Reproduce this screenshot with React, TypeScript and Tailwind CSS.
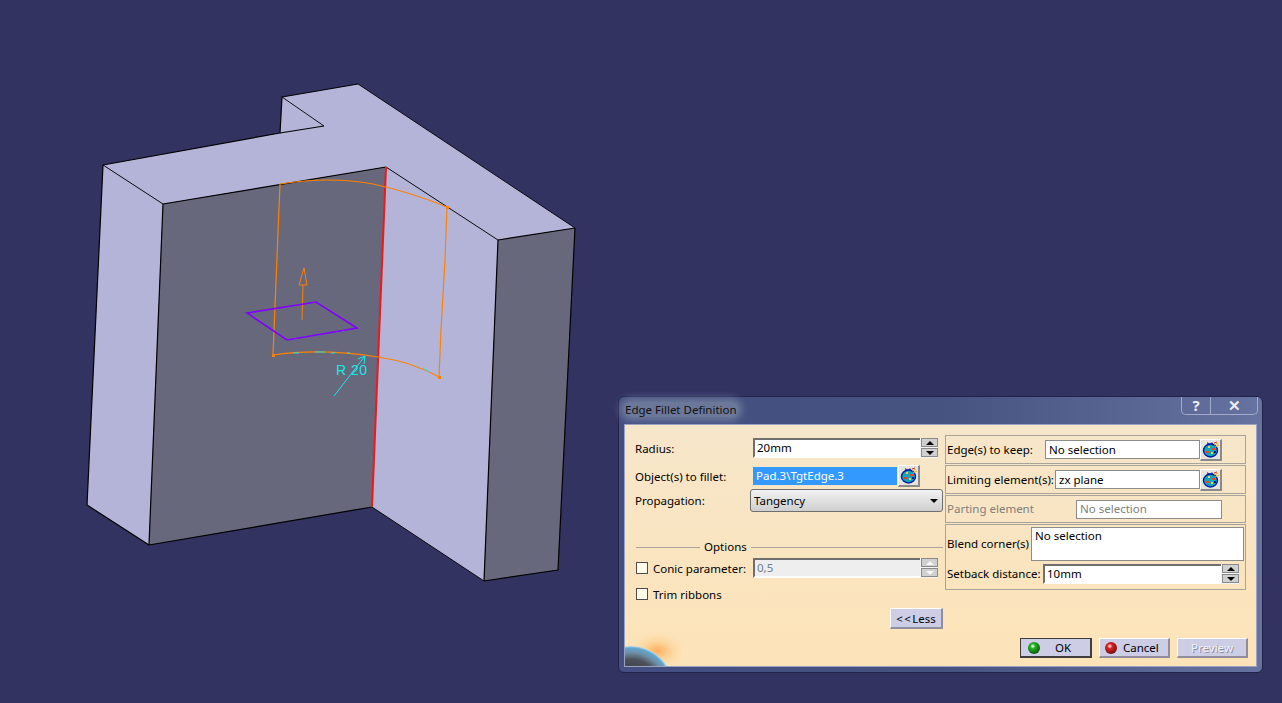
import type { ReactNode } from 'react';

function Model() {
  return (
    <svg className="absolute inset-0" width="1282" height="703" viewBox="0 0 1282 703" fill="none">
      {/* faces */}
      <polygon points="103,165 280,133 282,97 358,84 575,228 498,240 386,167 163,204" fill="#b4b4d9" />
      <polygon points="103,165 163,204 149,545 87,505" fill="#b4b4d9" />
      <polygon points="163,204 386,167 372,507 149,545" fill="#68687d" />
      <polygon points="386,167 498,240 484,581 372,507" fill="#b4b4d9" />
      <polygon points="498,240 575,228 558,570 484,581" fill="#68687d" />
      {/* edges */}
      <g stroke="#000" strokeWidth="1.2" strokeLinejoin="round">
        <polyline points="87,505 103,165 280,133 282,97 358,84" />
        <polyline points="575,228 558,570 484,581" />
        <polyline points="149,545 87,505" />
        <polyline points="372,507 149,545" />
        <polyline points="163,204 149,545" />
        <polyline points="163,204 386,167" />
        <polyline points="498,240 484,581" />
        <polyline points="498,240 575,228" />
        <polyline points="280,133 324,126" />
      </g>
      <g stroke="#000" strokeWidth="0.9">
        <polyline points="358,84 575,228" />
        <polyline points="484,581 372,507" />
        <polyline points="103,165 163,204" />
        <polyline points="386,167 498,240" />
        <polyline points="324,126 282,97" />
      </g>
      <line x1="386" y1="167" x2="372" y2="507" stroke="#f01818" strokeWidth="2" />
      {/* fillet preview */}
      <g stroke="#ff8000" strokeWidth="1.2">
        <path d="M280 184 Q330 176 373 184 Q410 192 447 207 L445 260 L441 330 L439 377 Q412 362 378 357 Q320 348 273 355 Z" />
      </g>
      <g stroke="#ff8000" strokeWidth="1">
        <path d="M302 320 L303 285" />
        <path d="M299 285 L307 285 L304 268 Z" />
      </g>
      <g fill="#ff8000">
        <rect x="272" y="354" width="3" height="3" />
        <rect x="438" y="376" width="3" height="3" />
        <rect x="446" y="206" width="3" height="3" />
      </g>
      <polygon points="247,313 316,302 357,328 287,340" stroke="#8000ff" strokeWidth="1.6" />
      {/* radius callout */}
      <g stroke="#19e6e6" strokeWidth="1">
        <path d="M334 396 L365 356" />
        <path d="M365 356 L358 359 M365 356 L364 364" />
        <path d="M293 353 L299 353 M315 352 L325 352 M331 353 L335 353 M347 353 L350 353 M423 368 L430 372" />
      </g>
      <text x="336" y="375" fill="#19e6e6" fontSize="14" letterSpacing="0.5" fontFamily="'Liberation Sans', sans-serif" fontWeight="300">
        R 20
      </text>
    </svg>
  );
}

function BagIcon() {
  return (
    <svg width="18" height="18" viewBox="0 0 18 18">
      <path d="M5 2 L7 3.5 L9 3.5 L10 2 L11 4 L8 5 L5.5 4 Z" fill="#0018a8" />
      <ellipse cx="8.5" cy="10.5" rx="7" ry="6.5" fill="#0fa8b8" stroke="#0018a8" strokeWidth="1.4" />
      <rect x="6" y="6" width="2" height="2" fill="#f4d23c" />
      <rect x="10" y="8" width="3" height="2" fill="#e8402a" />
      <rect x="4" y="11" width="3" height="2" fill="#e8402a" />
      <rect x="9" y="12" width="2" height="2" fill="#f4d23c" />
      <rect x="12" y="11" width="2" height="2" fill="#0018a8" />
      <path d="M12 5 L16 3 M13 7 L17 5" stroke="#e8b020" strokeWidth="1" />
      <path d="M12 3 L15 2" stroke="#e03020" strokeWidth="1" />
    </svg>
  );
}

function PickButton() {
  return (
    <div className="flex h-[22px] w-[22px] shrink-0 items-center justify-center border-t border-l border-white border-r-2 border-b-2 border-r-[#8a8a8a] border-b-[#8a8a8a] bg-[#e6e3dc]">
      <BagIcon />
    </div>
  );
}

function Spinner({ disabled }: { disabled?: boolean }) {
  return (
    <div className="flex w-[18px] shrink-0 flex-col gap-[1px] bg-[#f4f4f4] pl-[1px]">
      <div className="flex h-[9px] items-center justify-center border border-[#8a8a8a] bg-[#d0d0d0]">
        <div className={`h-0 w-0 border-x-[4px] border-b-[4px] border-x-transparent ${disabled ? 'border-b-[#f8f8f8]' : 'border-b-black'}`} />
      </div>
      <div className="flex h-[9px] items-center justify-center border border-[#8a8a8a] bg-[#d0d0d0]">
        <div className={`h-0 w-0 border-x-[4px] border-t-[4px] border-x-transparent ${disabled ? 'border-t-[#f8f8f8]' : 'border-t-black'}`} />
      </div>
    </div>
  );
}

function SpinField({ value, disabled, className }: { value: string; disabled?: boolean; className: string }) {
  return (
    <div className={`flex h-5 shrink-0 ${className}`}>
      <div
        className={`flex min-w-0 flex-1 items-center border-t-2 border-l-2 border-[#6f6f6f] border-b-2 border-b-white pl-[2px] ${
          disabled ? 'bg-[#eeeeee] text-[#6d7f90]' : 'bg-white'
        }`}
      >
        {value}
      </div>
      <Spinner disabled={disabled} />
    </div>
  );
}

function PlainField({ children, className }: { children: ReactNode; className: string }) {
  return (
    <div className={`flex h-[19px] shrink-0 items-center border border-[#8c8c8c] bg-white pl-[3px] ${className}`}>
      {children}
    </div>
  );
}

function Group({ children, className }: { children: ReactNode; className: string }) {
  return <div className={`border border-[#a8a49b] ${className}`}>{children}</div>;
}

function Check({ label }: { label: ReactNode }) {
  return (
    <div className="flex w-[117px] shrink-0 items-center gap-[5px]">
      <div className="h-3 w-3 shrink-0 border border-[#4c4c4c] bg-[#fffde8]" />
      <span className="pt-[2px]">{label}</span>
    </div>
  );
}

function Led({ from, to }: { from: string; to: string }) {
  return (
    <svg width="14" height="14" viewBox="0 0 14 14">
      <defs>
        <radialGradient id={from} cx="0.4" cy="0.35" r="0.7">
          <stop offset="0" stopColor="#ffffff" />
          <stop offset="0.3" stopColor={from} />
          <stop offset="1" stopColor={to} />
        </radialGradient>
      </defs>
      <circle cx="7" cy="7" r="6" fill={`url(#${from})`} />
    </svg>
  );
}

function FootButton({ children, pressed, className }: { children: ReactNode; pressed?: boolean; className?: string }) {
  return (
    <div
      className={`flex h-5 items-center bg-[#cdcde6] ${
        pressed
          ? 'w-[72px] border border-[#3f3f3f] border-r-2 border-b-2'
          : 'w-[71px] border-t border-l border-white border-r-2 border-b-2 border-r-[#8f8f9c] border-b-[#8f8f9c]'
      } ${className ?? ''}`}
    >
      {children}
    </div>
  );
}

function Globe() {
  return (
    <svg className="absolute bottom-0 left-0" width="56" height="38" viewBox="0 0 56 38">
      <defs>
        <radialGradient id="sun" cx="0.58" cy="0.6" r="0.55">
          <stop offset="0" stopColor="#fbb060" />
          <stop offset="0.4" stopColor="#fcd296" />
          <stop offset="1" stopColor="#fce3b9" stopOpacity="0" />
        </radialGradient>
        <radialGradient id="earth" gradientUnits="userSpaceOnUse" cx="6" cy="60" r="42">
          <stop offset="0" stopColor="#2c2c30" />
          <stop offset="0.68" stopColor="#4c5058" />
          <stop offset="0.84" stopColor="#6f8ea6" />
          <stop offset="0.95" stopColor="#5fa6d0" />
          <stop offset="1" stopColor="#b4dcf0" />
        </radialGradient>
      </defs>
      <rect width="56" height="38" fill="url(#sun)" />
      <circle cx="6" cy="60" r="42" fill="url(#earth)" />
    </svg>
  );
}

export default function App() {
  return (
    <div className="relative h-[703px] w-[1282px] overflow-hidden bg-[#333362] font-['Noto_Sans',sans-serif] text-[11.5px] leading-none whitespace-nowrap text-black">
      <Model />

      {/* dialog window */}
      <div className="absolute top-[396px] left-[618px] flex h-[277px] w-[645px] flex-col rounded-[6px] border border-[#22224a] bg-gradient-to-r from-[#434f82] via-[#46527f] to-[#66729f] px-[5px] pb-[5px]">
        <div className="relative flex h-[27px] shrink-0 items-center pb-[2px]">
          <div className="rounded-[10px] bg-[#6c7899] px-[1px] py-[2px] text-[#111] shadow-[0_0_7px_4px_#6c7899]">
            Edge Fillet Definition
          </div>
          <div className="absolute top-0 right-[-1px] flex h-[18px] w-[77px] rounded-b-[5px] border border-t-0 border-[#a4abc8] text-[15px] font-bold text-[#eeeeee]">
            <div className="flex w-[29px] items-center justify-center border-r border-[#a4abc8]">?</div>
            <div className="flex flex-1 items-center justify-center">✕</div>
          </div>
        </div>

        <div className="relative flex min-h-0 flex-1 flex-col border border-[#9aa2c2] bg-gradient-to-b from-[#f6e6ca] to-[#fde3b8] pt-[10px] pl-[10px]">
          <Globe />
          <div className="relative flex">
            {/* left column */}
            <div className="flex w-[310px] shrink-0 flex-col">
              <div className="mt-[3px] flex h-5 items-center">
                <span className="w-[118px] shrink-0 pt-[2px]">Radius:</span>
                <SpinField value="20mm" className="w-[185px]" />
              </div>
              <div className="mt-[7px] flex h-[21px] items-center">
                <span className="w-[118px] shrink-0 pt-[2px]">Object(s) to fillet:</span>
                <div className="flex h-[18px] w-[144px] items-center bg-[#3399ff] pl-[3px] text-white">
                  Pad.3\TgtEdge.3
                </div>
                <div className="ml-[1px]">
                  <PickButton />
                </div>
              </div>
              <div className="mt-[3px] flex h-[23px] items-center">
                <span className="w-[115px] shrink-0 pt-[1px]">Propagation:</span>
                <div className="flex h-[23px] w-[193px] items-center justify-between rounded-[3px] border border-[#6f6f6f] bg-gradient-to-b from-[#f2f2f2] to-[#cfcfcf] pr-[4px] pl-[3px]">
                  Tangency
                  <div className="h-0 w-0 border-x-[4px] border-t-[4px] border-x-transparent border-t-black" />
                </div>
              </div>
              <div className="mt-[28px] flex h-[14px] items-center gap-[4px] pl-[1px]">
                <div className="h-px w-[64px] bg-[#a8a49b]" />
                <span>Options</span>
                <div className="mr-[2px] h-px flex-1 bg-[#a8a49b]" />
              </div>
              <div className="mt-[4px] flex h-5 items-center pl-[1px]">
                <Check label="Conic parameter:" />
                <SpinField value="0,5" disabled className="w-[185px]" />
              </div>
              <div className="mt-[6px] flex h-5 items-center pl-[1px]">
                <Check label="Trim ribbons" />
              </div>
              <div className="mt-[4px] flex justify-end pr-[2px]">
                <div className="flex h-[21px] w-[53px] items-center justify-center border-t border-l border-white border-r-2 border-b-2 border-r-[#8f8f9c] border-b-[#8f8f9c] bg-[#cdcde6] pt-[1px]">
                  <span className="tracking-[1.5px]">&lt;&lt;</span>Less
                </div>
              </div>
            </div>

            {/* right column */}
            <div className="flex w-[301px] shrink-0 flex-col gap-px">
              <Group className="flex h-[29px] items-center pl-[1px]">
                <span className="w-[98px] shrink-0">Edge(s) to keep:</span>
                <PlainField className="w-[155px]">No selection</PlainField>
                <PickButton />
              </Group>
              <Group className="flex h-[29px] items-center pl-[1px]">
                <span className="w-[108px] shrink-0">Limiting element(s):</span>
                <PlainField className="w-[145px]">zx plane</PlainField>
                <PickButton />
              </Group>
              <Group className="flex h-[28px] items-center pl-[1px] text-[#808080]">
                <span className="w-[129px] shrink-0">Parting element</span>
                <PlainField className="w-[146px]">No selection</PlainField>
              </Group>
              <Group className="flex h-[66px] flex-col pl-[1px]">
                <div className="mt-[2px] flex h-[34px] items-center">
                  <span className="w-[84px] shrink-0">Blend corner(s)</span>
                  <div className="h-[34px] w-[213px] border border-[#8c8c8c] bg-white pt-[2px] pl-[3px]">No selection</div>
                </div>
                <div className="mt-[3px] flex h-5 items-center">
                  <span className="w-[96px] shrink-0">Setback distance:</span>
                  <SpinField value="10mm" className="w-[196px]" />
                </div>
              </Group>
            </div>
          </div>

          {/* footer buttons */}
          <div className="relative mt-[9px] flex justify-end gap-[7px] pr-[8px]">
            <FootButton pressed className="pl-[6px]">
              <Led from="#22b422" to="#0a500a" />
              <span className="ml-[14px]">OK</span>
            </FootButton>
            <FootButton className="pl-[4px]">
              <Led from="#e02020" to="#601010" />
              <span className="ml-[5px]">Cancel</span>
            </FootButton>
            <FootButton className="justify-center text-[#f0f0f6] [text-shadow:1px_1px_0_#8f8f9c]">Preview</FootButton>
          </div>
        </div>
      </div>
    </div>
  );
}
